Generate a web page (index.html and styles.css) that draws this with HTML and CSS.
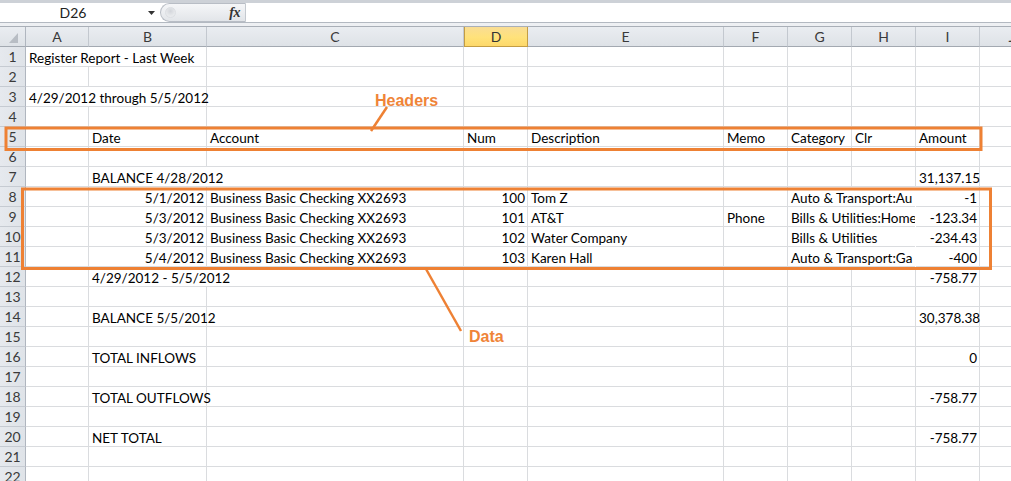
FILE: index.html
```html
<!DOCTYPE html>
<html>
<head>
<meta charset="utf-8">
<link rel="stylesheet" href="styles.css">
</head>
<body>
<div class="app">
  <div class="fbar">
    <div class="namebox">
      <span class="name">D26</span>
      <svg class="caret" width="7" height="4" viewBox="0 0 7 4"><path d="M0 0H7L3.5 4Z" fill="#333"/></svg>
    </div>
    <div class="pill"><span class="knob"></span><span class="fx">fx</span></div>
    <div class="formula"></div>
  </div>
  <div class="fgap"></div>

  <div class="sheet">
    <div class="r colhead">
      <div class="ch corner"><span class="tri"></span></div>
      <div class="ch">A</div><div class="ch">B</div><div class="ch">C</div><div class="ch sel">D</div><div class="ch">E</div><div class="ch">F</div><div class="ch">G</div><div class="ch">H</div><div class="ch">I</div><div class="ch">J</div>
    </div>

    <div class="r"><div class="h">1</div><div class="c s2">Register Report - Last Week</div><div class="c"></div><div class="c"></div><div class="c"></div><div class="c"></div><div class="c"></div><div class="c"></div><div class="c"></div><div class="c"></div></div>
    <div class="r"><div class="h">2</div><div class="c"></div><div class="c"></div><div class="c"></div><div class="c"></div><div class="c"></div><div class="c"></div><div class="c"></div><div class="c"></div><div class="c"></div><div class="c"></div></div>
    <div class="r"><div class="h">3</div><div class="c s2">4/29/2012 through 5/5/2012</div><div class="c"></div><div class="c"></div><div class="c"></div><div class="c"></div><div class="c"></div><div class="c"></div><div class="c"></div><div class="c"></div></div>
    <div class="r"><div class="h">4</div><div class="c"></div><div class="c"></div><div class="c"></div><div class="c"></div><div class="c"></div><div class="c"></div><div class="c"></div><div class="c"></div><div class="c"></div><div class="c"></div></div>
    <div class="r"><div class="h">5</div><div class="c"></div><div class="c">Date</div><div class="c">Account</div><div class="c">Num</div><div class="c">Description</div><div class="c">Memo</div><div class="c">Category</div><div class="c">Clr</div><div class="c">Amount</div><div class="c"></div></div>
    <div class="r"><div class="h">6</div><div class="c"></div><div class="c"></div><div class="c"></div><div class="c"></div><div class="c"></div><div class="c"></div><div class="c"></div><div class="c"></div><div class="c"></div><div class="c"></div></div>
    <div class="r"><div class="h">7</div><div class="c"></div><div class="c s2">BALANCE 4/28/2012</div><div class="c"></div><div class="c"></div><div class="c"></div><div class="c"></div><div class="c"></div><div class="c n">31,137.15</div><div class="c"></div></div>
    <div class="r"><div class="h">8</div><div class="c"></div><div class="c n">5/1/2012</div><div class="c">Business Basic Checking XX2693</div><div class="c n">100</div><div class="c">Tom Z</div><div class="c"></div><div class="c s2 clip">Auto &amp; Transport:Au</div><div class="c n">-1</div><div class="c"></div></div>
    <div class="r"><div class="h">9</div><div class="c"></div><div class="c n">5/3/2012</div><div class="c">Business Basic Checking XX2693</div><div class="c n">101</div><div class="c">AT&amp;T</div><div class="c">Phone</div><div class="c s2 clip">Bills &amp; Utilities:Home</div><div class="c n">-123.34</div><div class="c"></div></div>
    <div class="r"><div class="h">10</div><div class="c"></div><div class="c n">5/3/2012</div><div class="c">Business Basic Checking XX2693</div><div class="c n">102</div><div class="c">Water Company</div><div class="c"></div><div class="c s2 clip">Bills &amp; Utilities</div><div class="c n">-234.43</div><div class="c"></div></div>
    <div class="r"><div class="h">11</div><div class="c"></div><div class="c n">5/4/2012</div><div class="c">Business Basic Checking XX2693</div><div class="c n">103</div><div class="c">Karen Hall</div><div class="c"></div><div class="c s2 clip">Auto &amp; Transport:Ga</div><div class="c n">-400</div><div class="c"></div></div>
    <div class="r"><div class="h">12</div><div class="c"></div><div class="c s2">4/29/2012 - 5/5/2012</div><div class="c"></div><div class="c"></div><div class="c"></div><div class="c"></div><div class="c"></div><div class="c n">-758.77</div><div class="c"></div></div>
    <div class="r"><div class="h">13</div><div class="c"></div><div class="c"></div><div class="c"></div><div class="c"></div><div class="c"></div><div class="c"></div><div class="c"></div><div class="c"></div><div class="c"></div><div class="c"></div></div>
    <div class="r"><div class="h">14</div><div class="c"></div><div class="c">BALANCE 5/5/2012</div><div class="c"></div><div class="c"></div><div class="c"></div><div class="c"></div><div class="c"></div><div class="c"></div><div class="c n">30,378.38</div><div class="c"></div></div>
    <div class="r"><div class="h">15</div><div class="c"></div><div class="c"></div><div class="c"></div><div class="c"></div><div class="c"></div><div class="c"></div><div class="c"></div><div class="c"></div><div class="c"></div><div class="c"></div></div>
    <div class="r"><div class="h">16</div><div class="c"></div><div class="c">TOTAL INFLOWS</div><div class="c"></div><div class="c"></div><div class="c"></div><div class="c"></div><div class="c"></div><div class="c"></div><div class="c n">0</div><div class="c"></div></div>
    <div class="r"><div class="h">17</div><div class="c"></div><div class="c"></div><div class="c"></div><div class="c"></div><div class="c"></div><div class="c"></div><div class="c"></div><div class="c"></div><div class="c"></div><div class="c"></div></div>
    <div class="r"><div class="h">18</div><div class="c"></div><div class="c">TOTAL OUTFLOWS</div><div class="c"></div><div class="c"></div><div class="c"></div><div class="c"></div><div class="c"></div><div class="c"></div><div class="c n">-758.77</div><div class="c"></div></div>
    <div class="r"><div class="h">19</div><div class="c"></div><div class="c"></div><div class="c"></div><div class="c"></div><div class="c"></div><div class="c"></div><div class="c"></div><div class="c"></div><div class="c"></div><div class="c"></div></div>
    <div class="r"><div class="h">20</div><div class="c"></div><div class="c">NET TOTAL</div><div class="c"></div><div class="c"></div><div class="c"></div><div class="c"></div><div class="c"></div><div class="c"></div><div class="c n">-758.77</div><div class="c"></div></div>
    <div class="r"><div class="h">21</div><div class="c"></div><div class="c"></div><div class="c"></div><div class="c"></div><div class="c"></div><div class="c"></div><div class="c"></div><div class="c"></div><div class="c"></div><div class="c"></div></div>
    <div class="r"><div class="h">22</div><div class="c"></div><div class="c"></div><div class="c"></div><div class="c"></div><div class="c"></div><div class="c"></div><div class="c"></div><div class="c"></div><div class="c"></div><div class="c"></div></div>
  </div>

  <svg class="ann" width="1011" height="481" viewBox="0 0 1011 481">
    <rect x="6" y="128" width="975" height="21.5" fill="none" stroke="#ee8134" stroke-width="3"/>
    <rect x="22.5" y="189" width="968" height="79.5" fill="none" stroke="#ee8134" stroke-width="3"/>
    <line x1="371" y1="131" x2="387" y2="107" stroke="#ee8134" stroke-width="2.5"/>
    <line x1="426" y1="269" x2="461" y2="331" stroke="#ee8134" stroke-width="2.5"/>
  </svg>
  <span class="label lab-headers">Headers</span>
  <span class="label lab-data">Data</span>
</div>
</body>
</html>
```

FILE: styles.css
```css
* {
  box-sizing: border-box;
  margin: 0;
  padding: 0;
}

body {
  width: 1011px;
  height: 481px;
  overflow: hidden;
  background: #ffffff;
  font-family: Lato, "Liberation Sans", sans-serif;
  font-size: 13.5px;
  color: #000;
}

.app {
  position: relative;
  width: 1011px;
  height: 481px;
  overflow: hidden;
}

/* formula bar */
.fbar {
  display: flex;
  height: 23px;
  border-top: 3px solid #cdd1d7;
  border-bottom: 1px solid #b3b9c1;
  background: #ffffff;
}

.namebox {
  width: 160px;
  display: flex;
  align-items: center;
  background: #fff;
}

.name {
  width: 146px;
  text-align: center;
  font-size: 14px;
  line-height: 19px;
  color: #222;
}

.caret {
  margin-left: 2px;
}

.pill {
  width: 86px;
  display: flex;
  align-items: center;
  justify-content: space-between;
  padding: 0 5px 0 4px;
  border: 1px solid #b8bdc5;
  border-right: 1px solid #c4c9cf;
  border-radius: 10px 0 0 10px;
  background: linear-gradient(#f5f6f8, #e2e5e9);
}

.knob {
  width: 11px;
  height: 11px;
  border-radius: 50%;
  background: radial-gradient(circle at 50% 35%, #d3d6db 0, #e6e8eb 60%, #eef0f2 100%);
  border: 1px solid #dcdfe3;
}

.fx {
  font-family: "Liberation Serif", serif;
  font-style: italic;
  font-weight: bold;
  font-size: 14px;
  color: #333;
  letter-spacing: -0.5px;
}

.formula {
  flex: 1;
  background: #fff;
}

.fgap {
  height: 4px;
  background: #eef0f3;
  border-bottom: 1px solid #a9afb7;
}

/* sheet */
.r {
  display: grid;
  grid-template-columns: 26px 63px 118px 257px 64px 196px 64px 64px 64px 64px 64px;
  height: 20px;
  width: 1044px;
}

.ch {
  height: 20px;
  background: linear-gradient(#eaedf1, #dee2e7);
  border-right: 1px solid #c3c8cf;
  border-bottom: 1px solid #a3a9b1;
  text-align: center;
  line-height: 19px;
  color: #3a3a3a;
  font-size: 14px;
}

.corner {
  position: relative;
  border-right: 1px solid #b0b6bf;
}

.tri {
  position: absolute;
  right: 7px;
  bottom: 3px;
  width: 0;
  height: 0;
  border-left: 9px solid transparent;
  border-bottom: 10px solid #b8bdc4;
}

.ch.sel {
  background: linear-gradient(#f9dd94, #ffe27a 55%, #fdd86a);
  border: 1px solid #c39d44;
  border-top: none;
  color: #333;
}

.h {
  height: 20px;
  background: linear-gradient(90deg, #e6e9ee, #dfe3e8);
  border-right: 1px solid #b0b6bf;
  border-bottom: 1px solid #c6cbd2;
  text-align: center;
  line-height: 20px;
  color: #3a3a3a;
  font-size: 14px;
}

.c {
  height: 20px;
  border-right: 1px solid #dadcdf;
  border-bottom: 1px solid #dadcdf;
  padding: 2px 2px 0 3px;
  line-height: 19px;
  white-space: nowrap;
}

.c.n {
  text-align: right;
}

.c.s2 {
  grid-column: span 2;
}

.c.clip {
  clip-path: inset(0 1px -3px 0);
  padding-right: 0;
}

/* annotations */
.ann {
  position: absolute;
  left: 0;
  top: 0;
  pointer-events: none;
}

.label {
  position: absolute;
  font-family: "Liberation Sans", Arial, sans-serif;
  font-weight: bold;
  font-size: 16px;
  line-height: 16px;
  color: #ef8438;
}

.lab-headers {
  left: 375px;
  top: 93px;
}

.lab-data {
  left: 469px;
  top: 329px;
}
```
